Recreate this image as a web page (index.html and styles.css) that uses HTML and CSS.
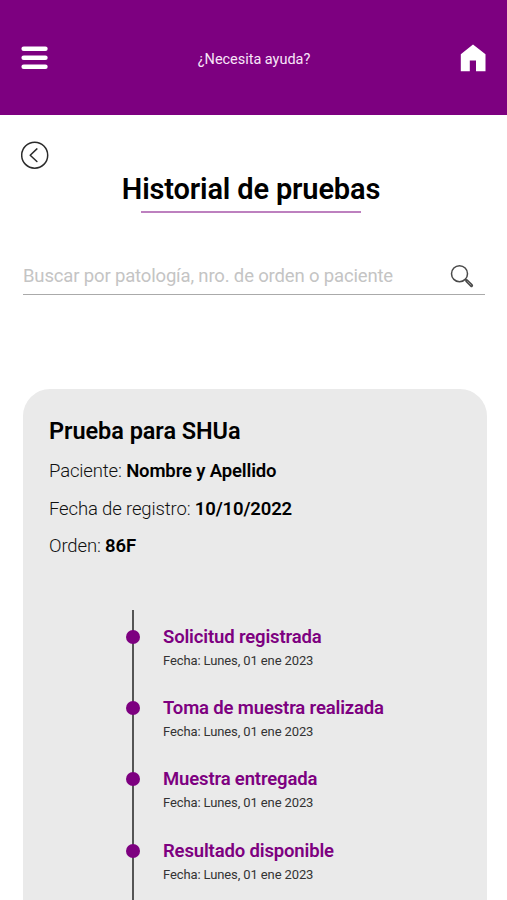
FILE: index.html
```html
<!DOCTYPE html>
<html lang="es">
<head>
<meta charset="utf-8">
<meta name="viewport" content="width=device-width, initial-scale=1">
<title>Historial de pruebas</title>
<link rel="stylesheet" href="styles.css">
</head>
<body>
<header class="topbar">
  <button class="icon-button" aria-label="Menú">
    <svg width="28" height="28" viewBox="0 0 28 28" fill="none" stroke="#fff" stroke-width="4.6" stroke-linecap="round"><path d="M3.700 4.700h21.700M3.700 13.700h21.700M3.700 22.700h21.700"/></svg>
  </button>
  <a class="help">¿Necesita ayuda?</a>
  <a class="icon-button" aria-label="Inicio">
    <svg width="28" height="28" viewBox="0 0 28 28" fill="#fff"><path d="M1.800 10.200 14 .5l12.500 9.700V27.300h-9.500V16.500h-6.200V27.300h-9z"/></svg>
  </a>
</header>
<main class="page">
  <button class="icon-button back" aria-label="Volver">
    <svg width="28" height="28" viewBox="0 0 28 28" fill="none" stroke="#2b2b2b" stroke-width="1.5" stroke-linecap="round" stroke-linejoin="round"><circle cx="13.700" cy="14.200" r="13"/><path d="M15.900 7.900 9.200 14.200l6.700 6.300"/></svg>
  </button>
  <h1 class="title">Historial de pruebas</h1>
  <div class="search">
    <span class="placeholder">Buscar por patología, nro. de orden o paciente</span>
    <svg width="24" height="24" viewBox="0 0 24 24" fill="none" stroke="#4a4a4a"><circle cx="9.500" cy="9.700" r="8" stroke-width="1.500"/><path d="m15.200 15.200 2 2" stroke-width="1.500"/><path d="m16.800 16.800 4.700 4.700" stroke-width="3.200" stroke-linecap="round"/><path d="m17.300 17.300 4 4" stroke="#a5a5a5" stroke-width=".8"/></svg>
  </div>
  <section class="card">
    <h2 class="card-title">Prueba para SHUa</h2>
    <p class="field">Paciente: <b>Nombre y Apellido</b></p>
    <p class="field">Fecha de registro: <b>10/10/2022</b></p>
    <p class="field">Orden: <b>86F</b></p>
    <ol class="timeline">
      <li class="step"><i class="dot"></i><div><h3 class="step-title">Solicitud registrada</h3><p class="date">Fecha: Lunes, 01 ene 2023</p></div></li>
      <li class="step"><i class="dot"></i><div><h3 class="step-title">Toma de muestra realizada</h3><p class="date">Fecha: Lunes, 01 ene 2023</p></div></li>
      <li class="step"><i class="dot"></i><div><h3 class="step-title">Muestra entregada</h3><p class="date">Fecha: Lunes, 01 ene 2023</p></div></li>
      <li class="step"><i class="dot"></i><div><h3 class="step-title">Resultado disponible</h3><p class="date">Fecha: Lunes, 01 ene 2023</p></div></li>
    </ol>
  </section>
</main>
</body>
</html>
```
FILE: styles.css
```css
* { box-sizing: border-box; margin: 0; padding: 0; }
body { font-family: Roboto, "Liberation Sans", sans-serif; background: #fff; color: #000; }
svg { display: block; }
.icon-button { display: block; border: 0; background: none; }
.topbar {
  height: 115px;
  padding: 0 20px;
  background: #7d0080;
  display: flex;
  align-items: center;
  justify-content: space-between;
}
.help { color: #f8e6f8; font-size: 14.500px; line-height: 18px; padding: 5px 0 0 1px; letter-spacing: -.03px; }
.page { height: 785px; padding: 26px 21px 0; }
.back { width: 28px; }
.title {
  width: 260px;
  margin: 0 0 0 100px;
  font-size: 29px;
  line-height: 38px;
  font-weight: 600;
  letter-spacing: -.16px;
  padding-top: 1px;
  white-space: nowrap;
  display: flex;
  flex-direction: column;
  align-items: center;
}
.title::after { content: ""; width: 220px; height: 2px; margin-top: 3px; background: #bd80bf; }
.search {
  display: flex;
  align-items: center;
  justify-content: space-between;
  height: 39px;
  margin: 43px 1px 0 2px;
  padding: 2px 11px 0 0;
  border-bottom: 1px solid #aaa;
}
.placeholder { color: #c4c4c4; font-size: 18.500px; letter-spacing: -.16px; white-space: nowrap; }
.card {
  margin: 94px -1px 0 2px;
  height: 511px;
  padding: 25px 26px 0;
  border-radius: 27px 27px 0 0;
  background: #eaeaea;
}
.card-title { font-size: 23.500px; line-height: 34px; font-weight: 600; letter-spacing: -.05px; margin-bottom: 5px; }
.field { font-size: 18.500px; line-height: 37.500px; font-weight: 300; letter-spacing: -.14px; color: #111; white-space: nowrap; }
.field b { font-weight: 600; color: #000; }
.timeline {
  list-style: none;
  margin: 44px 0 0 83px;
  padding-top: 15px;
  height: 290px;
  border-left: 2px solid #555;
}
.step { display: flex; height: 71.400px; margin-left: -8px; }
.step:last-child { height: 60px; }
.dot { width: 14px; height: 14px; margin: 5px 23px 0 0; border-radius: 50%; background: #7d0080; }
.step-title { font-size: 18.500px; line-height: 24px; font-weight: 600; letter-spacing: -.15px; color: #7d0080; white-space: nowrap; }
.date { font-size: 13px; line-height: 24px; letter-spacing: -.11px; color: #333; }
```
